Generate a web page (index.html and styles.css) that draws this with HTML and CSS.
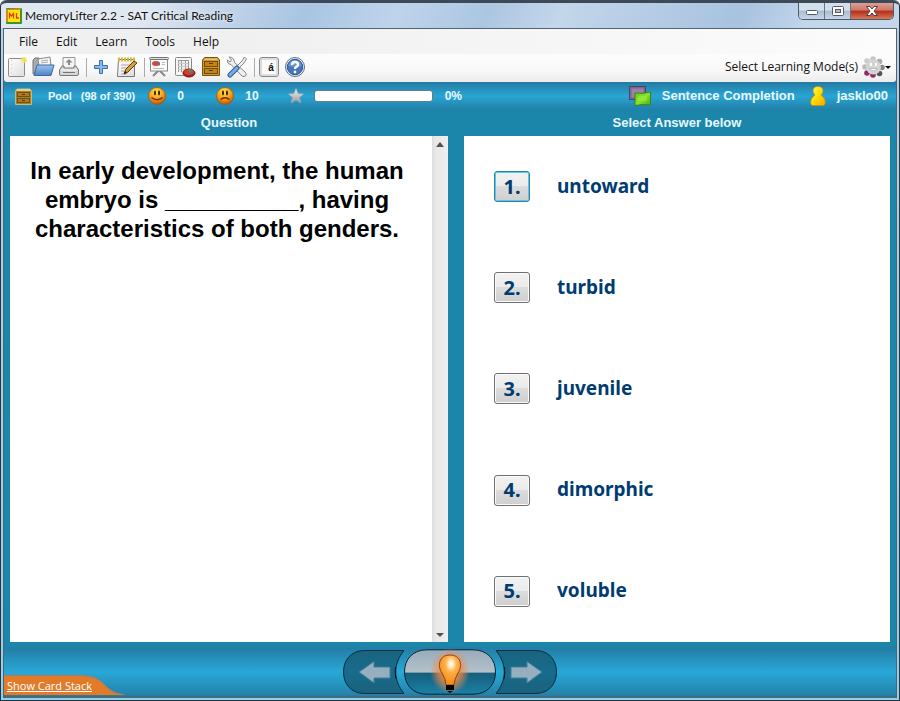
FILE: index.html
```html
<!DOCTYPE html>
<html lang="en">
<head>
<meta charset="utf-8">
<title>MemoryLifter 2.2 - SAT Critical Reading</title>
<link rel="stylesheet" href="styles.css">
</head>
<body>
<svg class="defs" aria-hidden="true">
  <defs>
    <linearGradient id="paper" x1="0" y1="0" x2="1" y2="1"><stop offset="0" stop-color="#fff"/><stop offset="1" stop-color="#ddd"/></linearGradient>
    <linearGradient id="folder" x1="0" y1="0" x2="0" y2="1"><stop offset="0" stop-color="#9ec3ec"/><stop offset="1" stop-color="#4b84c4"/></linearGradient>
    <radialGradient id="face" cx=".45" cy=".25" r=".75"><stop offset="0" stop-color="#ffe34d"/><stop offset=".55" stop-color="#f9a11b"/><stop offset="1" stop-color="#c55400"/></radialGradient>
    <radialGradient id="glow"><stop offset=".3" stop-color="#ff8a30"/><stop offset=".65" stop-color="#f58a48" stop-opacity=".6"/><stop offset="1" stop-color="#f58a48" stop-opacity="0"/></radialGradient>
    <radialGradient id="bulb" cx=".55" cy=".3" r=".6"><stop offset="0" stop-color="#fff"/><stop offset=".15" stop-color="#fff0cf"/><stop offset=".45" stop-color="#ffb04a"/><stop offset="1" stop-color="#f5901c"/></radialGradient>
    <linearGradient id="glass" x1="0" y1="0" x2="0" y2="1"><stop offset="0" stop-color="#98abba"/><stop offset=".5" stop-color="#b3c1cb"/><stop offset=".53" stop-color="#155f7b"/><stop offset="1" stop-color="#1b81a6"/></linearGradient>
    <linearGradient id="pill" x1="0" y1="0" x2="0" y2="1"><stop offset="0" stop-color="#19637f"/><stop offset=".5" stop-color="#186c8b"/><stop offset="1" stop-color="#19617c"/></linearGradient>
    <linearGradient id="green" x1="0" y1="0" x2="1" y2="1"><stop offset="0" stop-color="#62c51d"/><stop offset=".5" stop-color="#8be42b"/><stop offset="1" stop-color="#45a80f"/></linearGradient>
    <linearGradient id="gold" x1="0" y1="0" x2="1" y2="1"><stop offset="0" stop-color="#fff36a"/><stop offset=".5" stop-color="#ffdd00"/><stop offset="1" stop-color="#f5a400"/></linearGradient>
    <linearGradient id="silver" x1="0" y1="0" x2="0" y2="1"><stop offset="0" stop-color="#f5f5f5"/><stop offset="1" stop-color="#999"/></linearGradient>
  </defs>
</svg>
<div class="window">
  <header class="titlebar">
    <svg class="app-icon" width="16" height="16" viewBox="0 0 16 16"><rect width="16" height="16" rx="1" fill="#3d932e"/><path d="M0 1L15 0V2H2V14H0Z" fill="#d58a20"/><rect x="2" y="2" width="12" height="12" fill="#ffe40b"/><path d="M3.500 10.500V5.500L5.500 8L7.500 5.500V10.500M10.500 5V10H13" fill="none" stroke="#e63b12" stroke-width="1.300"/></svg>
    <h1 class="title">MemoryLifter 2.2 - SAT Critical Reading</h1>
    <div class="caption-buttons">
      <button class="caption" aria-label="Minimize"><svg width="14" height="10"><rect x="1.500" y="4.500" width="11" height="4" rx="1" fill="#fff" stroke="#555b66"/></svg></button>
      <button class="caption" aria-label="Maximize"><svg width="14" height="10"><rect x="1.500" y=".5" width="11" height="9" rx="1" fill="#fff" stroke="#555b66"/><rect x="4.500" y="3.500" width="5" height="3" fill="#aebfd2" stroke="#555b66"/></svg></button>
      <button class="caption close" aria-label="Close"><svg width="14" height="10"><path d="M1.500 .5H5L7 3L9 .5H12.500L9 5L12.500 9.500H9L7 7L5 9.500H1.500L5 5Z" fill="#fff" stroke="#5d3b3b"/></svg></button>
    </div>
  </header>
  <div class="client">
    <nav class="menu">
      <button>File</button><button>Edit</button><button>Learn</button><button>Tools</button><button>Help</button>
    </nav>
    <div class="toolbar">
      <button class="tool" aria-label="New"><svg width="20" height="22"><rect x="1.500" y="2.500" width="16" height="18" rx="1" fill="url(#paper)" stroke="#8b8b8b"/><path d="M4.500 4V18" stroke="#ccc" stroke-dasharray="1 3"/><circle cx="17" cy="4" r="3" fill="#f5e458" opacity=".8"/></svg></button>
      <button class="tool" aria-label="Open"><svg width="24" height="22"><path d="M2 18V4L4 2H8L10 4H15V16Z" fill="#aaa" stroke="#777"/><path d="M7 3L19 1L20 10H8Z" fill="#f6f6f6" stroke="#888"/><path d="M10 5L17 4M10 7L17 6" stroke="#aaa"/><path d="M6 9H23L20 19.500H3Z" fill="url(#folder)" stroke="#3968a5"/></svg></button>
      <button class="tool" aria-label="Print"><svg width="22" height="22"><path d="M5 12V1.500H17V12" fill="#f5f5f5" stroke="#999"/><path d="M11 9V5" stroke="#888" stroke-width="2"/><path d="M7.500 6.500L11 3L14.500 6.500Z" fill="#888"/><path d="M4 10L1.500 14V18Q1.500 19.500 3 19.500H19Q20.500 19.500 20.500 18V14L18 10H16V12H6V10Z" fill="#d6d6d6" stroke="#777"/><path d="M3 14H19" stroke="#fff"/><path d="M5 16.500H17" stroke="#777" stroke-width="1"/></svg></button>
      <span class="sep"></span>
      <button class="tool" aria-label="Add card"><svg width="16" height="16"><path d="M6.500 1.500H9.500V6.500H14.500V9.500H9.500V14.500H6.500V9.500H1.500V6.500H6.500Z" fill="#8ab9e8" stroke="#3970ad"/></svg></button>
      <button class="tool" aria-label="Edit card"><svg width="22" height="22"><path d="M2.500 3.500H18.500V20.500H1.500Z" fill="url(#paper)" stroke="#777"/><path d="M5 9H15M5 12H15M5 15H13M5 18H11" stroke="#aaa"/><path d="M2 3.500H19" stroke="#d8b636" stroke-width="4" stroke-dasharray="2 1"/><path d="M8 18L10 13L18 5L21 7L12 16Z" fill="#d89c3b" stroke="#5a3c16"/><path d="M8 18L9 15L11 16.500Z" fill="#222"/></svg></button>
      <span class="sep"></span>
      <button class="tool" aria-label="Presentation"><svg width="22" height="22"><path d="M11 14L5 20M11 14L17 20" stroke="#888" stroke-width="2"/><rect x="2.500" y="3" width="17" height="12" fill="#fafafa" stroke="#888"/><rect x="1.500" y="1.500" width="19" height="2" rx="1" fill="#ddd" stroke="#777"/><ellipse cx="8" cy="7.500" rx="4" ry="2.500" fill="#d84538"/><path d="M8 7.500L12 6.500V9.500Z" fill="#4779bd"/><path d="M14 6.500H17M14 8.500H17M5 12.500H16" stroke="#bbb"/></svg></button>
      <button class="tool" aria-label="Statistics"><svg width="22" height="22"><rect x="1.500" y="1.500" width="16" height="18" rx="1" fill="#f5f5f5" stroke="#888"/><rect x="4" y="4" width="11" height="12" fill="#eee"/><path d="M4.500 4V16M7.500 4V16M11.500 4V16M14.500 4V16M4 4.500H15" fill="none" stroke="#999"/><path d="M4 7.500H14M4 10.500H14M4 13.500H14" stroke="#ccc"/><ellipse cx="15" cy="17" rx="6" ry="4" fill="#ad1e18" stroke="#761510"/><ellipse cx="15" cy="16" rx="5" ry="3" fill="#d93b2d"/><path d="M15 16V13L19.500 14.500Z" fill="#62963d"/><path d="M15 16L19.500 14.500L18 18Z" fill="#4775b2"/></svg></button>
      <button class="tool" aria-label="Boxes"><svg width="18" height="20" viewBox="0 0 18 20"><path d="M.5 3L2.500 .5H15.500L17.500 3V18.500H.5Z" fill="#d39a28" stroke="#765313"/><path d="M2 3L3 1.500H15L16 3Z" fill="#e7c476"/><rect x="2.500" y="4.500" width="13" height="5" fill="#c58310" stroke="#704a0c"/><rect x="2.500" y="11.500" width="13" height="5" fill="#c58310" stroke="#704a0c"/><path d="M7 6.500H11M7 13.500H11" stroke="#4e3815"/></svg></button>
      <button class="tool" aria-label="Settings"><svg width="22" height="22"><path d="M3 1L5.500 4L4 6L1.500 4Q1 8 5 8.500L16 20Q18 21.500 20 19.500Q21 18 19 16L8.500 6.500Q8 1 3 1Z" fill="#eee" stroke="#888"/><path d="M18.500 1L20.500 3L18 7L13 12L11 10L16 5Z" fill="#eee" stroke="#888"/><path d="M11 12L4 19" stroke="#285b9c" stroke-width="5" stroke-linecap="round"/><path d="M11 12L4 19" stroke="#7eace0" stroke-width="3" stroke-linecap="round"/></svg></button>
      <span class="sep"></span>
      <button class="tool letter" aria-label="Character map"><span class="key">á</span></button>
      <button class="tool" aria-label="Help"><svg width="22" height="22"><circle cx="11" cy="11" r="9.500" fill="#eef2f8" stroke="#5c6d8b"/><circle cx="11" cy="11" r="7.700" fill="#4675b9" stroke="#24569b"/><path d="M4 10Q6 4 11 4Q16 4 18 10Q11 12 4 10Z" fill="#7fa5d6" opacity=".7"/><path d="M8 9Q8 6 11 6Q14 6 14 8.500Q14 10 12 11Q11 11.500 11 13" fill="none" stroke="#fff" stroke-width="2.400"/><circle cx="11" cy="16" r="1.400" fill="#fff"/></svg></button>
      <button class="mode">Select Learning Mode(s)
        <svg width="29" height="24"><g fill="#aaa"><circle cx="11" cy="4" r="2.800" fill="#c8c8c8"/><circle cx="17.500" cy="6.500" r="2.800" fill="#aaa"/><circle cx="20" cy="12.500" r="2.800" fill="#888"/><circle cx="17.500" cy="18.500" r="2.800" fill="#555"/><circle cx="11" cy="20" r="2.800" fill="#8e2b64"/><circle cx="5" cy="18" r="2.800" fill="#8e2b64"/><circle cx="3" cy="12" r="2.800" fill="#bbb"/><circle cx="5" cy="6" r="2.800" fill="#ccc"/></g><circle cx="11.500" cy="12" r="7.500" fill="#d4d4d4"/><path d="M9 8V11M14 8V11" stroke="#fff" stroke-width="2"/><path d="M7.500 13.500Q11.500 18 15.500 13.500Z" fill="#fff" stroke="#bbb"/><path d="M23 11H29L26 14Z" fill="#000"/></svg>
      </button>
    </div>
    <section class="status">
      <svg class="drawer-icon" width="17" height="17"><path d="M.5 3L2 1H15L16.500 3V16.500H.5Z" fill="#b57b1c" stroke="#c9b97c"/><path d="M1 3L2 1H15L16 3Z" fill="#ddd19e"/><rect x="2.500" y="4.500" width="12" height="4" fill="#b97910" stroke="#5f5426"/><rect x="2.500" y="10.500" width="12" height="4" fill="#b97910" stroke="#5f5426"/><path d="M7 6.500H10M7 12.500H10" stroke="#4e3815"/></svg>
      <span class="pool">Pool</span><span class="count">(98 of 390)</span>
      <svg class="right-face" width="18" height="18"><circle cx="9" cy="9" r="8.500" fill="url(#face)" stroke="#a65200" stroke-width=".7"/><ellipse cx="7" cy="6" rx="1" ry="2.400" fill="#30200a"/><ellipse cx="11" cy="6" rx="1" ry="2.400" fill="#30200a"/><path d="M3.500 10.500Q9 15 14.500 10.500" fill="none" stroke="#6d2900" stroke-width="1.300"/></svg>
      <span class="right-count">0</span>
      <svg class="wrong-face" width="18" height="18"><circle cx="9" cy="9" r="8.500" fill="url(#face)" stroke="#a65200" stroke-width=".7"/><ellipse cx="7" cy="6" rx="1" ry="2.400" fill="#30200a"/><ellipse cx="11" cy="6" rx="1" ry="2.400" fill="#30200a"/><path d="M4.500 12.500Q9 9 13.500 12.500" fill="none" stroke="#6d2900" stroke-width="1.300"/></svg>
      <span class="wrong-count">10</span>
      <svg class="star" width="16" height="16"><path d="M8 .5L10 5.500L15.500 6L11.500 9.500L13 15L8 12L3 15L4.500 9.500L.5 6L6 5.500Z" fill="url(#silver)" stroke="#aaa" stroke-width=".6"/></svg>
      <div class="progress" role="progressbar" aria-valuenow="0" aria-label="Score"></div><span>0%</span>
      <div class="session">
        <svg width="22" height="20"><rect x=".5" y=".5" width="16" height="13" fill="#79668c" stroke="#534360"/><rect x="2.500" y="2.500" width="12" height="9" fill="#9884aa"/><path d="M6 7Q14 8 21.500 6V19Q14 18 6 19.500Z" fill="url(#green)" stroke="#348514"/><path d="M9 10H18V15H9Z" fill="#a6f34a" opacity=".4"/></svg>
        <span>Sentence Completion</span>
        <svg class="user" width="16" height="20"><path d="M5 9Q3 7 3 5Q3 .5 8 .5Q13 .5 13 5Q13 7 11 9Q14 11 15 14Q16 18 14 19.500H2Q0 18 1 14Q2 11 5 9Z" fill="url(#gold)" stroke="#d18a08" stroke-width=".7"/></svg>
        <span>jasklo00</span>
      </div>
    </section>
    <main class="cards">
      <section class="column">
        <h2>Question</h2>
        <div class="panel question"><p>In early development, the human embryo is __________, having characteristics of both genders.</p>
          <div class="scroll"><svg width="8" height="5"><path d="M0 5L4 0L8 5Z" fill="#505050"/></svg><svg width="8" height="5"><path d="M0 0H8L4 4Z" fill="#505050"/></svg></div>
        </div>
      </section>
      <section class="column">
        <h2>Select Answer below</h2>
        <div class="panel answers">
          <div class="answer"><button id="a1" class="selected">1.</button><label for="a1">untoward</label></div>
          <div class="answer"><button id="a2">2.</button><label for="a2">turbid</label></div>
          <div class="answer"><button id="a3">3.</button><label for="a3">juvenile</label></div>
          <div class="answer"><button id="a4">4.</button><label for="a4">dimorphic</label></div>
          <div class="answer"><button id="a5">5.</button><label for="a5">voluble</label></div>
        </div>
      </section>
    </main>
    <footer class="footer">
      <div class="stack"><svg width="120" height="20"><path d="M0 .5H75C105 .5 96 17 120 19.500V20H0Z" fill="#e17b29"/><path d="M0 .5H75C105 .5 96 17 120 19.500" fill="none" stroke="#a08067"/></svg><a href="#">Show Card Stack</a></div>
      <div class="navigation">
        <button aria-label="Previous"><svg width="61" height="46"><path d="M61 1.500H22C7 1.500 .5 12 .5 23S7 44.500 22 44.500H61C50 31 50 15 61 1.500Z" fill="url(#pill)" stroke="#062f43"/><path d="M52.500 18Q51.500 24 53 30" fill="none" stroke="#111"/><path d="M16 23L31 12.500V18H47V29H31V34Z" fill="#95afc0" stroke="#427d98"/></svg></button>
        <button aria-label="Show answer"><svg width="92" height="46"><path d="M23 .8H69C84 .8 91.500 11 91.500 23S84 45.200 69 45.200H23C8 45.200 .5 35 .5 23S8 .8 23 .8Z" fill="url(#glass)" stroke="#08212e"/><ellipse cx="46" cy="22" rx="20" ry="23" fill="url(#glow)"/><path d="M42 36Q42 31 38 24C33 17 35 6 46 6S59 17 54 24Q50 31 50 36Z" fill="url(#bulb)" stroke="#8a4315"/><path d="M42 36H50V41H42Z" fill="#000"/><path d="M43 42H49L46 44Z" fill="#000"/></svg></button>
        <button aria-label="Next"><svg width="61" height="46"><path d="M0 1.500H39C54 1.500 60.500 12 60.500 23S54 44.500 39 44.500H0C11 31 11 15 0 1.500Z" fill="url(#pill)" stroke="#062f43"/><path d="M8.500 18Q9.500 24 8 30" fill="none" stroke="#111"/><path d="M46 23L31 12.500V18H15V29H31V34Z" fill="#95afc0" stroke="#427d98"/></svg></button>
      </div>
    </footer>
  </div>
</div>
</body>
</html>
```
FILE: styles.css
```css
* { box-sizing: border-box; }
body { margin: 0; background: #fff; font: 12px/16px "Open Sans", sans-serif; color: #111; }
button { appearance: none; margin: 0; padding: 0; border: 0; background: none; color: inherit; font: inherit; }
svg { display: block; flex: none; }
h1, h2, p { margin: 0; }
.defs { position: absolute; width: 0; height: 0; }

.window {
  min-height: 100vh;
  display: flex;
  flex-direction: column;
  border: 1px solid #25343f;
  border-top: 0;
  border-radius: 6px 6px 0 0;
  padding: 0 2px 2px;
  background: linear-gradient(#b9cfe7, #8fd0ee);
}
.titlebar {
  height: 28px;
  flex: none;
  margin: 0 -2px;
  padding: 0 5px;
  display: flex;
  align-items: center;
  border-top: 3px solid #3c4a58;
  border-radius: 6px 6px 0 0;
  background: linear-gradient(115deg, #dfe7f1 0 16%, #c4d5e9 24%, #a9c5e2 34%, #bfd4eb 44%, #acc6e1 54%, #c3d6ea 62%, #a8c2df 82%, #c3d7ec 90%);
}
.app-icon { margin-right: 3px; }
.title { font: 12px/16px "Lato", sans-serif; text-shadow: 0 0 5px #fff; }
.caption-buttons { margin-left: auto; align-self: flex-start; display: flex; border: 1px solid #4e5968; border-top: 0; border-radius: 0 0 5px 5px; overflow: hidden; }
.caption { width: 26px; height: 16px; display: grid; place-items: center; border-right: 1px solid #66768a; background: linear-gradient(#d3dfec 0 45%, #a9bccf 50%, #c5d7e7); }
.caption.close { width: 42px; border: 0; background: linear-gradient(#dba197 0, #cf7668 45%, #b42c18 50%, #d87958); }

.client { flex: 1; display: flex; flex-direction: column; border: 1px solid #52646f; background: #1c86aa; }
.menu { height: 25px; flex: none; padding-left: 6px; display: flex; background: linear-gradient(90deg, #f0f0f0 25%, #fcfcfc); }
.menu button { padding: 0 9px; }
.toolbar { height: 28px; flex: none; padding-bottom: 2px; display: flex; align-items: center; border-radius: 0 0 3px 3px; background: linear-gradient(#fdfdfd, #f8f8f8 60%, #ececec); }
.tool { width: 26px; height: 24px; display: grid; place-items: center; }
.sep { width: 6px; height: 19px; background: linear-gradient(#aaa, #aaa) 4px 0 / 1px 100% no-repeat; }
.key { width: 20px; height: 20px; border: 1px solid #888; border-radius: 3px; box-shadow: inset 0 0 0 2px #ddd; background: #fafafa; font: bold 10px/20px "Liberation Sans", sans-serif; padding-left: 4px; }
.mode { margin-left: auto; margin-right: 5px; display: flex; align-items: center; gap: 4px; }

.status {
  height: 28px;
  flex: none;
  padding: 0 8px 0 11px;
  display: flex;
  align-items: center;
  color: #e8f8ff;
  font: bold 12px/16px "Liberation Sans", sans-serif;
  background: linear-gradient(#237aa2, #29a5d4 50%, #217fa6);
}
.pool, .count { font-size: 11px; }
.pool { margin-left: 16px; }
.count { margin-left: 9px; }
.right-face { margin-left: 13px; }
.right-count { margin-left: 11px; width: 39px; }
.wrong-count { margin: 0 29px 0 11px; }
.progress { width: 119px; height: 12px; margin: 0 12px 0 10px; border: 1px solid #657b85; border-radius: 3px; background: #fff; }
.session { margin-left: auto; display: flex; align-items: center; gap: 11px; font-size: 13px; }
.user { margin-left: 4px; }

.cards { flex: 1; display: grid; grid-template-columns: 438fr 426fr; gap: 16px; padding: 0 6px 5px; }
.column { display: flex; flex-direction: column; min-width: 0; }
.column h2 { height: 26px; text-align: center; color: #e8f8ff; font: bold 13px/26px "Liberation Sans", sans-serif; }
.panel { flex: 1; background: #fff; }
.question { display: flex; }
.question p { flex: 1; padding: 20px 20px 20px 12px; text-align: center; color: #000; font: bold 24px/29px "Liberation Sans", sans-serif; }
.scroll { width: 16px; padding: 6px 0 4px; display: flex; flex-direction: column; justify-content: space-between; align-items: center; background: linear-gradient(90deg, #ddd, #e8e8e8 25%, #eee); }
.answers { display: grid; grid-template-rows: repeat(5, 1fr); padding-left: 30px; color: #003c70; font: bold 19px/24px "Noto Sans", sans-serif; }
.answer { display: flex; align-items: center; gap: 27px; }
.answer label { padding-bottom: 2px; }
.answer button { width: 36px; height: 31px; border: 1px solid #707070; border-radius: 3px; box-shadow: inset 0 0 0 1px #fafafa; background: linear-gradient(#f2f2f2, #ebebeb 48%, #dcdcdc 50%, #cfcfcf); font-size: 20px; }
.answer .selected { border-color: #3582a5; box-shadow: inset 0 0 0 1px #55c8ed; }

.footer { height: 50px; flex: none; display: grid; grid-template-columns: 1fr auto 1fr; align-items: center; background: linear-gradient(#237ca3, #29a8d7 50%, #2383aa 95%, #3e6d82); }
.navigation { grid-column: 2; display: flex; }
.stack { display: grid; align-self: end; }
.stack svg, .stack a { grid-area: 1 / 1; }
.stack a { padding: 3px; color: #fff; font: 11px/16px "Open Sans", sans-serif; }
```
